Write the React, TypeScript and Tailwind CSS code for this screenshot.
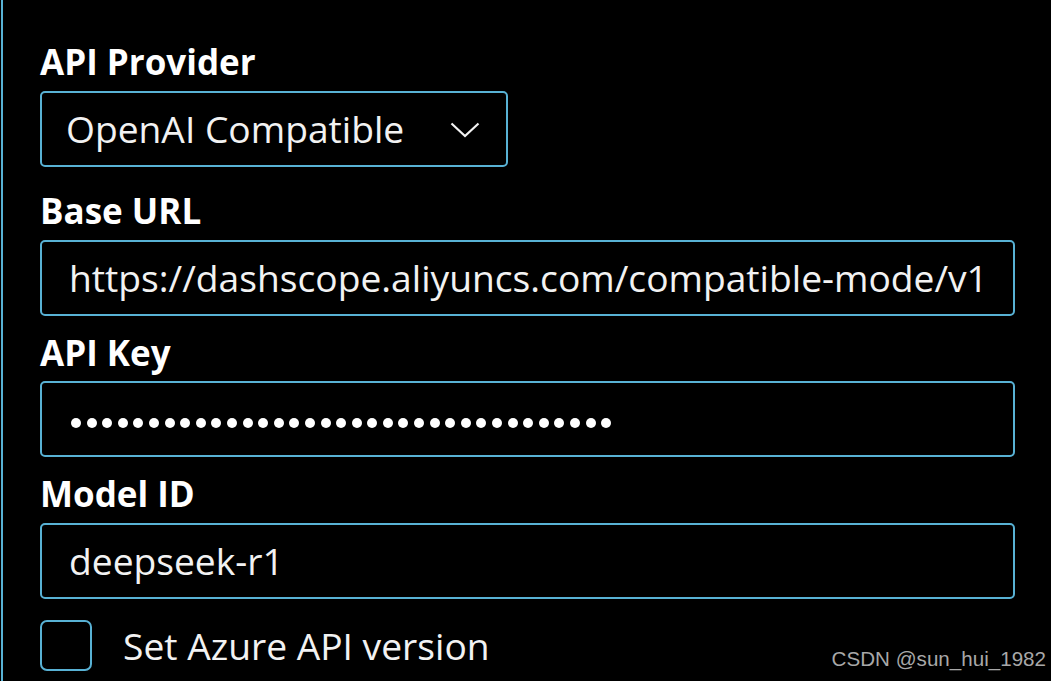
import React from "react";

const font = { fontFamily: '"Open Sans", "Noto Sans", sans-serif' };

function FieldLabel({ children }: { children: React.ReactNode }) {
  return (
    <div className="h-[40px] leading-[40px] text-[35px] font-bold text-white">
      {children}
    </div>
  );
}

function TextBox({ children }: { children: React.ReactNode }) {
  return (
    <div className="flex h-[76px] w-[975px] items-center rounded-[5px] border-2 border-[#58b1d4] pl-[27px] text-[37.2px] text-[#f2f2f2]">
      {children}
    </div>
  );
}

function Chevron() {
  return (
    <svg width="30" height="16" viewBox="0 0 30 16" fill="none">
      <path d="M1.5 1.5 L15 14 L28.5 1.5" stroke="#f2f2f2" strokeWidth="2.2" />
    </svg>
  );
}

export default function App() {
  const dots = Array.from({ length: 35 }, (_, i) => i);

  return (
    <div className="relative h-[681px] w-[1051px] overflow-hidden bg-black" style={font}>
      <div className="ml-px h-full border-l-2 border-[#58b1d4] pl-[37px] pt-[42px]">
        <FieldLabel>API Provider</FieldLabel>
        <div className="mt-[9px] flex h-[76px] w-[468px] items-center justify-between rounded-[5px] border-2 border-[#58b1d4] pl-[24px] pr-[26px] text-[37.2px] text-[#f2f2f2]">
          <span>OpenAI Compatible</span>
          <div className="mt-[2px]">
            <Chevron />
          </div>
        </div>

        <div className="mt-[24px]">
          <FieldLabel>Base URL</FieldLabel>
        </div>
        <div className="mt-[9px]">
          <TextBox>https://dashscope.aliyuncs.com/compatible-mode/v1</TextBox>
        </div>

        <div className="mt-[17px]">
          <FieldLabel>API Key</FieldLabel>
        </div>
        <div className="mt-[8px]">
          <TextBox>
            <div className="mt-[8px] flex gap-[5.6px] pl-[2px]">
              {dots.map((i) => (
                <div key={i} className="h-[10px] w-[10px] rounded-full bg-white" />
              ))}
            </div>
          </TextBox>
        </div>

        <div className="mt-[17px]">
          <FieldLabel>Model ID</FieldLabel>
        </div>
        <div className="mt-[9px]">
          <TextBox>deepseek-r1</TextBox>
        </div>

        <div className="mt-[19px] flex items-center">
          <div className="h-[51px] w-[52px] rounded-[7px] border-2 border-[#58b1d4]" />
          <span className="ml-[31px] text-[37.2px] text-[#f2f2f2]">Set Azure API version</span>
        </div>
      </div>

      <div
        className="absolute bottom-[6px] right-[5px] text-[20.6px] text-[#a8a8a8]"
        style={{ fontFamily: '"Liberation Sans", Arial, sans-serif' }}
      >
        CSDN @sun_hui_1982
      </div>
    </div>
  );
}
